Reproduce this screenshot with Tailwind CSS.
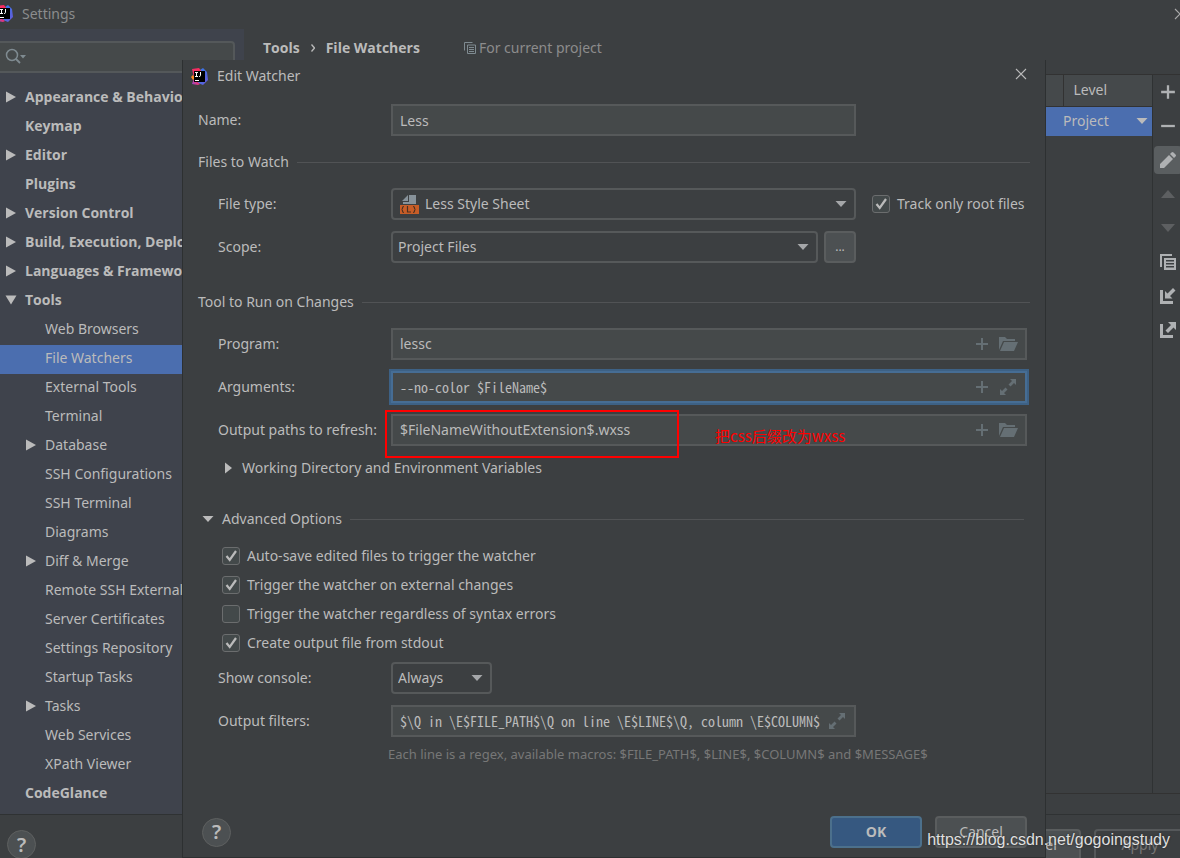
<!DOCTYPE html>
<html lang="en">
<head>
<meta charset="utf-8">
<title>Settings</title>
<script src="https://cdn.jsdelivr.net/npm/@tailwindcss/browser@4"></script>
</head>
<body class="bg-[#3c3f41] font-['Noto_Sans','Noto_Sans_CJK_SC',sans-serif] text-sm text-[#bbbbbb]">

<svg class="absolute size-0" aria-hidden="true">
  <defs>
    <linearGradient id="gBlue" x1="0" y1="0" x2="1" y2="1"><stop offset="0" stop-color="#2b7de9"/><stop offset="1" stop-color="#6b57d8"/></linearGradient>
    <linearGradient id="gRed" x1="1" y1="0" x2="0" y2="1"><stop offset="0" stop-color="#fe2857"/><stop offset=".6" stop-color="#f0306a"/><stop offset="1" stop-color="#8f4fd0"/></linearGradient>
  </defs>
  <symbol id="logo" viewBox="0 0 17 17">
    <path fill="url(#gBlue)" d="M9 2l3-2 4 4 1 8-5 5-5-2z"/>
    <path fill="url(#gRed)" d="M1 1l7-1 3 4-6 9 4 3-2 1-6-1 2-6z"/>
    <path fill="#fc8a25" d="M0 9l2-2 2 3-2 2z"/>
    <path fill="#000" d="M3 3h11v11H3z"/>
    <path stroke="#fff" stroke-width="1" fill="none" d="M4 4.500h3M5.500 4.500v4M4 8.500h3M9.500 4v3.500q0 1-1.500 1M4 12.500h4"/>
  </symbol>
  <symbol id="close" viewBox="0 0 12 12"><path d="M1 1l10 10M11 1L1 11" stroke="currentColor" stroke-width="1.100"/></symbol>
  <symbol id="down" viewBox="0 0 12 12"><path d="M.500 3h11L6 9z" fill="currentColor"/></symbol>
  <symbol id="right" viewBox="0 0 12 12"><path d="M1 .500v11L11 6z" fill="currentColor"/></symbol>
  <symbol id="opened" viewBox="0 0 12 12"><path d="M.500 1.500h11L6 10.500z" fill="currentColor"/></symbol>
  <symbol id="plus" viewBox="0 0 14 14"><path d="M7 1v12M1 7h12" stroke="currentColor" stroke-width="2"/></symbol>
  <symbol id="folder" viewBox="0 0 19 16"><path fill="currentColor" d="M0 14V1h6l2 2h8v2H4zM5 6h14l-4 9H1z"/></symbol>
  <symbol id="expand" viewBox="0 0 16 16"><path fill="currentColor" d="M10 0h6v6l-2-2-3.500 3.500-2-2L12 2zM0 16v-6l2 2 3.500-3.500 2 2L4 14l2 2z"/></symbol>
  <symbol id="check" viewBox="0 0 18 18"><path d="M4.500 9l3.200 4L14 4" fill="none" stroke="currentColor" stroke-width="2.200"/></symbol>
</svg>

<div class="relative flex h-screen flex-col overflow-hidden">

  <!-- Settings window -->
  <header class="flex h-[29px] shrink-0 items-center pb-0.5 text-[#8b8d8e]">
    <svg class="-ml-1 size-[17px]"><use href="#logo"/></svg>
    <h1 class="ml-[9px] grow">Settings</h1>
    <button aria-label="Close settings" class="-mr-1.5 text-[#aaaaaa]"><svg class="size-3"><use href="#close"/></svg></button>
  </header>

  <div class="flex min-h-0 grow">
    <aside class="w-[244px] shrink-0 overflow-hidden bg-[#3f434c] pt-3">
      <label class="-ml-1 mr-[9px] flex h-8 items-center rounded border-2 border-[#54585a] bg-[#45494a] pl-[7px] text-[#7f8b91]">
        <svg class="size-[22px]" viewBox="0 0 22 22"><circle cx="7" cy="9" r="5.500" fill="none" stroke="currentColor" stroke-width="1.500"/><path d="M11 13l4 4" stroke="currentColor" stroke-width="1.800"/><path d="M15 9h6l-3 3.500z" fill="currentColor"/></svg>
        <input type="search" aria-label="Search settings" class="w-0 grow bg-transparent outline-none">
      </label>
      <ul class="mt-[11px] whitespace-nowrap leading-[26px] [&_a]:flex [&_a]:h-[29px] [&_a]:pb-[3px] [&_a]:items-center [&_svg]:size-3">
        <li><a href="#" class="gap-2 pl-[5px] font-['Open_Sans',sans-serif] font-bold"><svg><use href="#right"/></svg>Appearance &amp; Behavior</a></li>
        <li><a href="#" class="pl-[25px] font-['Open_Sans',sans-serif] font-bold">Keymap</a></li>
        <li><a href="#" class="gap-2 pl-[5px] font-['Open_Sans',sans-serif] font-bold"><svg><use href="#right"/></svg>Editor</a></li>
        <li><a href="#" class="pl-[25px] font-['Open_Sans',sans-serif] font-bold">Plugins</a></li>
        <li><a href="#" class="gap-2 pl-[5px] font-['Open_Sans',sans-serif] font-bold"><svg><use href="#right"/></svg>Version Control</a></li>
        <li><a href="#" class="gap-2 pl-[5px] font-['Open_Sans',sans-serif] font-bold"><svg><use href="#right"/></svg>Build, Execution, Deployment</a></li>
        <li><a href="#" class="gap-2 pl-[5px] font-['Open_Sans',sans-serif] font-bold"><svg><use href="#right"/></svg>Languages &amp; Frameworks</a></li>
        <li><a href="#" class="gap-2 pl-[5px] font-['Open_Sans',sans-serif] font-bold"><svg><use href="#opened"/></svg>Tools</a>
          <ul>
            <li><a href="#" class="pl-[45px]">Web Browsers</a></li>
            <li><a href="#" aria-current="page" class="bg-[#4b6eaf] pl-[45px]">File Watchers</a></li>
            <li><a href="#" class="pl-[45px]">External Tools</a></li>
            <li><a href="#" class="pl-[45px]">Terminal</a></li>
            <li><a href="#" class="gap-2 pl-[25px]"><svg><use href="#right"/></svg>Database</a></li>
            <li><a href="#" class="pl-[45px]">SSH Configurations</a></li>
            <li><a href="#" class="pl-[45px]">SSH Terminal</a></li>
            <li><a href="#" class="pl-[45px]">Diagrams</a></li>
            <li><a href="#" class="gap-2 pl-[25px]"><svg><use href="#right"/></svg>Diff &amp; Merge</a></li>
            <li><a href="#" class="pl-[45px]">Remote SSH External Tools</a></li>
            <li><a href="#" class="pl-[45px]">Server Certificates</a></li>
            <li><a href="#" class="pl-[45px]">Settings Repository</a></li>
            <li><a href="#" class="pl-[45px]">Startup Tasks</a></li>
            <li><a href="#" class="gap-2 pl-[25px]"><svg><use href="#right"/></svg>Tasks</a></li>
            <li><a href="#" class="pl-[45px]">Web Services</a></li>
            <li><a href="#" class="pl-[45px]">XPath Viewer</a></li>
          </ul>
        </li>
        <li><a href="#" class="pl-[25px] font-['Open_Sans',sans-serif] font-bold">CodeGlance</a></li>
      </ul>
    </aside>

    <main class="flex min-w-0 grow flex-col pb-5">
      <div class="flex h-[45px] shrink-0 items-center pb-2 pl-[19px]">
        <span class="font-['Open_Sans',sans-serif] font-bold">Tools</span>
        <svg class="mx-[11px] h-2 w-1" viewBox="0 0 4 8"><path d="M.500 .500L3.500 4 .500 7.500" fill="none" stroke="currentColor" stroke-width="1.300"/></svg>
        <span class="font-['Open_Sans',sans-serif] font-bold">File Watchers</span>
        <svg class="ml-11 size-3 text-[#7f8b91]" viewBox="0 0 12 12"><path d="M.500 8.500v-8h8M3.500 3h8v8.500h-8zM5 5.500h5M5 7.500h5M5 9.500h5" fill="none" stroke="currentColor"/></svg>
        <span class="ml-[3px] text-[#8c8c8c]">For current project</span>
      </div>
      <div class="flex grow border-y border-[#323232]">
        <div class="w-0 grow border-r border-[#2f3233]">
          <table class="w-full table-fixed text-left">
            <thead>
              <tr class="h-[31px] border-b border-[#323232] bg-[#45494b]"><th></th><th class="w-[89px] border-l border-[#323232] pl-2.5 font-normal">Level</th></tr>
            </thead>
            <tbody>
              <tr class="h-[30px] bg-[#4b6eaf]"><td></td><td>
                <button class="flex w-full items-center justify-between pr-1">Project<svg class="size-3"><use href="#down"/></svg></button>
              </td></tr>
            </tbody>
          </table>
        </div>
        <div class="flex w-[27px] shrink-0 flex-col gap-1.5 overflow-hidden pl-px pt-[3px] text-[#afb1b3] [&>button]:grid [&>button]:h-7 [&>button]:w-7 [&>button]:shrink-0 [&>button]:place-items-center [&>button]:rounded [&_svg]:size-4">
          <button aria-label="Add"><svg><use href="#plus"/></svg></button>
          <button aria-label="Remove"><svg viewBox="0 0 14 14"><path d="M1 7h12" stroke="currentColor" stroke-width="2"/></svg></button>
          <button aria-label="Edit" class="bg-[#5a5e60]"><svg viewBox="0 0 16 16"><path fill="currentColor" d="M0 16v-4l9-9 4 4-9 9zM10 2l1.500-1.500q1-1 2 0l2 2q1 1 0 2L14 6z"/></svg></button>
          <button aria-label="Move up" disabled class="text-[#5d5f61]"><svg viewBox="0 0 16 16"><path fill="currentColor" d="M8 4l7 8H1z"/></svg></button>
          <button aria-label="Move down" disabled class="text-[#5d5f61]"><svg viewBox="0 0 16 16"><path fill="currentColor" d="M8 12l7-8H1z"/></svg></button>
          <button aria-label="Copy"><svg viewBox="0 0 16 16"><path fill="currentColor" d="M0 0h12v2H2v11H0z"/><path fill="currentColor" fill-rule="evenodd" d="M4 4h12v12H4zM6 6v1.500h8V6zm0 3v1.500h8V9zm0 3v1.500h8V12z"/></svg></button>
          <button aria-label="Import"><svg viewBox="0 0 16 16"><path fill="currentColor" d="M0 2h3v11h10v3H0zM5 3l2.500 2.500L13 0l2.500 2.500L10 8l2.500 2.500H5z"/></svg></button>
          <button aria-label="Export"><svg viewBox="0 0 16 16"><path fill="currentColor" d="M0 2h3v11h10v3H0zM8 0h8v8l-2.500-2.500L8 11 5.500 8.500 11 3z"/></svg></button>
        </div>
      </div>
    </main>
  </div>

  <footer class="flex h-11 shrink-0 items-start justify-end gap-[13px] overflow-hidden border-t border-[#2f3233] pl-[7px] pt-3.5">
    <button aria-label="Settings help" class="mr-auto mt-px grid size-[29px] shrink-0 place-items-center rounded-full border border-[#5e6060] bg-[#4c5052] text-xl font-semibold leading-none">?</button>
    <button class="h-8 w-[92px] rounded border-2 border-[#5a5d5e] bg-[#4c5052]">Cancel</button>
    <button disabled class="-mr-1.5 h-8 w-[92px] rounded border-2 border-[#55585a] text-[#777777]">Apply</button>
  </footer>

  <!-- Edit Watcher dialog, floating over the settings window -->
  <section role="dialog" aria-labelledby="dlg-title" class="absolute bottom-0 left-[182px] right-[134px] top-[60px] flex flex-col border-x border-b border-[#2d3031] bg-[#3c3f41] px-[15px]">
    <header class="-ml-[7px] flex h-8 shrink-0 items-center">
      <svg class="size-[17px]"><use href="#logo"/></svg>
      <h2 id="dlg-title" class="ml-[9px] grow">Edit Watcher</h2>
      <button aria-label="Close dialog" class="-mt-1 mr-[3px]"><svg class="size-3"><use href="#close"/></svg></button>
    </header>

    <form class="flex grow flex-col">
      <div class="mt-3 flex h-8 items-center">
        <label for="name" class="w-[193px]">Name:</label>
        <input id="name" value="Less" class="mr-[174px] h-8 w-0 grow border-2 border-[#56595a] bg-[#45494a] px-[7px]">
      </div>

      <h3 class="mt-4 flex h-5 items-center gap-2 after:h-px after:grow after:bg-[#515355]">Files to Watch</h3>
      <div class="mt-4 flex h-8 items-center pl-5">
        <label for="type" class="w-[173px]">File type:</label>
        <div class="grid grow items-center [&>*]:[grid-area:1/1]">
          <select id="type" class="h-8 w-full appearance-none rounded border-2 border-[#56595a] pl-8"><option>Less Style Sheet</option></select>
          <svg class="ml-[9px] size-5" viewBox="0 0 20 20"><path fill="#9aa7b0" fill-opacity=".8" d="M8 1v6H2zM9 1h7v9H3V8h6z"/><path fill="#c75d27" d="M0 11h19v9H0z"/><path d="M4 12.500q-1.500 0-1.500 1.500 0 1.500-1 1.500 1 0 1 1.500 0 1.500 1.500 1.500M7.500 12v6H11M13 12.500q1.500 0 1.500 1.500 0 1.500 1 1.500-1 0-1 1.500 0 1.500-1.500 1.500" fill="none" stroke="#4a3020" stroke-width="1.200"/></svg>
          <svg class="pointer-events-none mr-[9px] size-3 justify-self-end text-[#a5a7a9]"><use href="#down"/></svg>
        </div>
        <label class="ml-4 flex w-[158px] items-center gap-[7px] whitespace-nowrap">
          <span class="grid [&>*]:[grid-area:1/1]"><input type="checkbox" checked class="size-[18px] appearance-none rounded-[3px] border border-[#6b6d6e] bg-[#43494a]"><svg class="size-[18px]"><use href="#check"/></svg></span>
          Track only root files
        </label>
      </div>
      <div class="mt-[11px] flex h-8 items-center pl-5 pr-[174px]">
        <label for="scope" class="w-[173px]">Scope:</label>
        <div class="grid grow items-center [&>*]:[grid-area:1/1]">
          <select id="scope" class="h-8 w-full appearance-none rounded border-2 border-[#56595a] pl-[5px]"><option>Project Files</option></select>
          <svg class="pointer-events-none mr-[9px] size-3 justify-self-end text-[#a5a7a9]"><use href="#down"/></svg>
        </div>
        <button type="button" aria-label="Choose scope" class="ml-1.5 h-8 w-8 rounded border-2 border-[#5a5d5e] bg-[#4c5052] text-xs">...</button>
      </div>

      <h3 class="mt-[29px] flex h-5 items-center gap-2 after:h-px after:grow after:bg-[#515355]">Tool to Run on Changes</h3>
      <div class="mt-4 flex h-8 items-center pl-5 pr-[3px]">
        <label for="program" class="w-[173px]">Program:</label>
        <div class="flex h-8 grow items-center gap-2.5 border-2 border-[#56595a] bg-[#45494a] px-[7px] text-[#656f74]">
          <input id="program" value="lessc" class="w-0 grow text-[#bbbbbb] outline-none">
          <button type="button" aria-label="Insert macro in program"><svg class="size-3.5"><use href="#plus"/></svg></button>
          <button type="button" aria-label="Browse program"><svg class="h-4 w-[19px]"><use href="#folder"/></svg></button>
        </div>
      </div>
      <div class="mt-[11px] flex h-8 items-center pl-5 pr-[3px]">
        <label for="args" class="w-[173px]">Arguments:</label>
        <div class="flex h-8 grow items-center gap-2.5 bg-[#45494a] px-[9px] text-[#656f74] outline-2 outline-[#3d6185] ring-2 ring-inset ring-[#466d94]">
          <input id="args" value="--no-color $FileName$" class="w-0 grow font-['Noto_Sans_Mono_CJK_SC','Liberation_Mono',monospace] text-sm text-[#bbbbbb] outline-none">
          <button type="button" aria-label="Insert macro in arguments"><svg class="size-3.5"><use href="#plus"/></svg></button>
          <button type="button" aria-label="Expand arguments" class="mr-0.5 pl-px"><svg class="size-4"><use href="#expand"/></svg></button>
        </div>
      </div>
      <div class="relative mt-[11px] flex h-8 items-center pl-5 pr-[3px]">
        <label for="paths" class="w-[173px] whitespace-nowrap">Output paths to refresh:</label>
        <div class="flex h-8 grow items-center gap-2.5 border-2 border-[#56595a] bg-[#45494a] px-[7px] text-[#656f74]">
          <input id="paths" value="$FileNameWithoutExtension$.wxss" class="w-0 grow text-[#bbbbbb] outline-none">
          <button type="button" aria-label="Insert macro in output paths"><svg class="size-3.5"><use href="#plus"/></svg></button>
          <button type="button" aria-label="Browse output paths"><svg class="h-4 w-[19px]"><use href="#folder"/></svg></button>
        </div>
        <!-- Red annotation -->
        <div class="pointer-events-none absolute -top-1 left-[187px] h-12 w-[294px] border-2 border-[#ff0000]"></div>
        <p class="pointer-events-none absolute left-[517px] top-2.5 font-['Noto_Sans_CJK_SC',sans-serif] text-[15px] leading-6 text-[#ff0000]">把css后缀改为wxss</p>
      </div>
      <button type="button" aria-expanded="false" class="mt-3 flex h-5 items-center gap-2 pl-6"><svg class="size-3" viewBox="0 0 12 12"><path d="M3 .500v11L10 6z" fill="currentColor"/></svg>Working Directory and Environment Variables</button>

      <h3 class="mt-[31px] flex h-5 items-center gap-2 pl-1 pr-1.5 after:h-px after:grow after:bg-[#515355]"><button type="button" aria-expanded="true" class="flex items-center gap-2"><svg class="size-3"><use href="#down"/></svg>Advanced Options</button></h3>
      <div class="mt-3 flex flex-col items-start pl-6 [&>label]:flex [&>label]:h-[29px] [&>label]:items-center [&>label]:gap-[7px]">
        <label><span class="grid [&>*]:[grid-area:1/1]"><input type="checkbox" checked class="size-[18px] appearance-none rounded-[3px] border border-[#6b6d6e] bg-[#43494a]"><svg class="size-[18px]"><use href="#check"/></svg></span>Auto-save edited files to trigger the watcher</label>
        <label><span class="grid [&>*]:[grid-area:1/1]"><input type="checkbox" checked class="size-[18px] appearance-none rounded-[3px] border border-[#6b6d6e] bg-[#43494a]"><svg class="size-[18px]"><use href="#check"/></svg></span>Trigger the watcher on external changes</label>
        <label><input type="checkbox" class="size-[18px] appearance-none rounded-[3px] border border-[#6b6d6e] bg-[#43494a]">Trigger the watcher regardless of syntax errors</label>
        <label><span class="grid [&>*]:[grid-area:1/1]"><input type="checkbox" checked class="size-[18px] appearance-none rounded-[3px] border border-[#6b6d6e] bg-[#43494a]"><svg class="size-[18px]"><use href="#check"/></svg></span>Create output file from stdout</label>
      </div>
      <div class="mt-[5px] flex h-8 items-center pl-5">
        <label for="console" class="w-[173px]">Show console:</label>
        <div class="grid w-[101px] items-center [&>*]:[grid-area:1/1]">
          <select id="console" class="h-8 w-full appearance-none rounded border-2 border-[#56595a] pl-[5px]"><option>Always</option></select>
          <svg class="pointer-events-none mr-[9px] size-3 justify-self-end text-[#a5a7a9]"><use href="#down"/></svg>
        </div>
      </div>
      <div class="mt-[11px] flex h-8 items-center pl-5 pr-[174px]">
        <label for="filters" class="w-[173px]">Output filters:</label>
        <div class="flex h-8 grow items-center border-2 border-[#56595a] bg-[#45494a] px-[7px] text-[#656f74]">
          <input id="filters" value="$\Q in \E$FILE_PATH$\Q on line \E$LINE$\Q, column \E$COLUMN$" class="w-0 grow font-['Noto_Sans_Mono_CJK_SC','Liberation_Mono',monospace] text-sm text-[#bbbbbb] outline-none">
          <button type="button" aria-label="Expand output filters" class="mr-0.5"><svg class="size-4"><use href="#expand"/></svg></button>
        </div>
      </div>
      <p class="mt-[7px] pl-[190px] text-[13px] leading-5 text-[#777777]">Each line is a regex, available macros: $FILE_PATH$, $LINE$, $COLUMN$ and $MESSAGE$</p>

      <div class="mb-[9px] mt-auto flex items-center gap-[13px] pl-1 pr-[3px]">
        <button type="button" aria-label="Help" class="mr-auto grid size-[29px] place-items-center rounded-full border border-[#5e6060] bg-[#4c5052] text-xl font-semibold leading-none">?</button>
        <button class="h-8 w-[92px] rounded border-2 border-[#4c708c] bg-[#365880] font-['Open_Sans',sans-serif] font-bold">OK</button>
        <button type="button" class="h-8 w-[92px] rounded border-2 border-[#5a5d5e] bg-[#4c5052]">Cancel</button>
      </div>
    </form>
  </section>

  <p class="pointer-events-none absolute bottom-1.5 right-2.5 font-['Liberation_Sans',sans-serif] text-base text-[#e0e0e0] [text-shadow:0_0_2px_#222]">https://blog.csdn.net/gogoingstudy</p>
</div>
</body>
</html>
